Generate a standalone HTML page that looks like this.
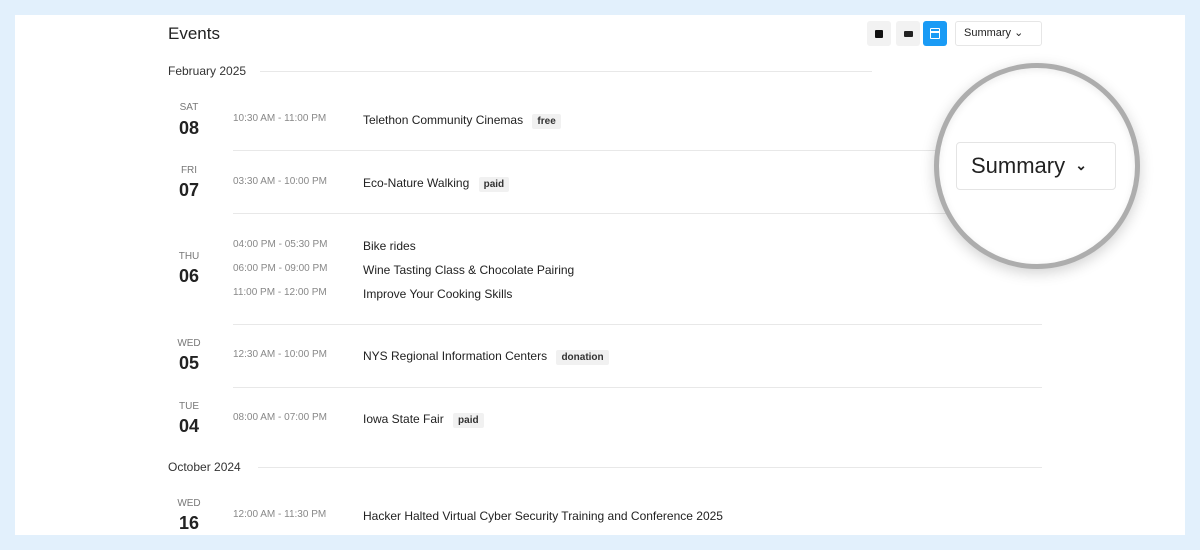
<!DOCTYPE html>
<html><head><style>
*{margin:0;padding:0;box-sizing:border-box}
body{width:1200px;height:550px;background:#e2f0fc;font-family:"Liberation Sans",sans-serif;position:relative;overflow:hidden;color:#222}
.panel{position:absolute;left:15px;top:15px;width:1170px;height:520px;background:#fff}
.a{position:absolute;white-space:nowrap}
.dw{font-size:10px;color:#777;width:42px;text-align:center;left:168px}
.dn{font-size:18px;font-weight:bold;color:#222;width:42px;text-align:center;left:168px}
.t{font-size:10px;color:#888;left:233px}
.n{font-size:12px;color:#222;left:363px}
.b{font-size:10px;background:#f1f1f1;padding:2px 5px;border-radius:2px;color:#333;font-weight:bold}
.hr{position:absolute;height:1px;background:#e8e8e8}
.m{font-size:12px;color:#333;left:168px}
.btn{position:absolute;top:21px;width:24px;height:25px;background:#f2f2f2;border-radius:3px}
</style></head><body>
<div class="panel"></div>
<div class="a" style="left:168px;top:24px;font-size:17px;color:#222">Events</div>
<div class="btn" style="left:867px"><div style="position:absolute;left:8px;top:9px;width:8px;height:8px;background:#111;border-radius:1px"></div></div>
<div class="btn" style="left:896px"><div style="position:absolute;left:8px;top:10px;width:9px;height:6px;background:#222;border-radius:1px"></div></div>
<div class="btn" style="left:923px;background:#1a9bf5"><div style="position:absolute;left:7px;top:7px;width:10px;height:11px;border:1.5px solid #fff;border-radius:1px"></div><div style="position:absolute;left:8px;top:10px;width:8px;height:1.5px;background:#fff"></div></div>
<div style="position:absolute;left:955px;top:21px;width:87px;height:25px;border:1px solid #e6e6e6;border-radius:3px;font-size:11px;line-height:23px;padding-left:8px">Summary ⌄</div>

<div class="a m" style="top:64px">February 2025</div>
<div class="hr" style="left:260px;width:612px;top:71px"></div>

<div class="a dw" style="top:102px">SAT</div><div class="a dn" style="top:118px">08</div>
<div class="a t" style="top:113px">10:30 AM - 11:00 PM</div>
<div class="a n" style="top:113px">Telethon Community Cinemas <span class="b" style="margin-left:6px">free</span></div>
<div class="hr" style="left:233px;width:809px;top:150px"></div>

<div class="a dw" style="top:165px">FRI</div><div class="a dn" style="top:180px">07</div>
<div class="a t" style="top:176px">03:30 AM - 10:00 PM</div>
<div class="a n" style="top:176px">Eco-Nature Walking <span class="b" style="margin-left:6px">paid</span></div>
<div class="hr" style="left:233px;width:809px;top:213px"></div>

<div class="a dw" style="top:251px">THU</div><div class="a dn" style="top:266px">06</div>
<div class="a t" style="top:239px">04:00 PM - 05:30 PM</div><div class="a n" style="top:239px">Bike rides</div>
<div class="a t" style="top:263px">06:00 PM - 09:00 PM</div><div class="a n" style="top:263px">Wine Tasting Class &amp; Chocolate Pairing</div>
<div class="a t" style="top:287px">11:00 PM - 12:00 PM</div><div class="a n" style="top:287px">Improve Your Cooking Skills</div>
<div class="hr" style="left:233px;width:809px;top:324px"></div>

<div class="a dw" style="top:338px">WED</div><div class="a dn" style="top:353px">05</div>
<div class="a t" style="top:349px">12:30 AM - 10:00 PM</div>
<div class="a n" style="top:349px">NYS Regional Information Centers <span class="b" style="margin-left:6px">donation</span></div>
<div class="hr" style="left:233px;width:809px;top:387px"></div>

<div class="a dw" style="top:401px">TUE</div><div class="a dn" style="top:416px">04</div>
<div class="a t" style="top:412px">08:00 AM - 07:00 PM</div>
<div class="a n" style="top:412px">Iowa State Fair <span class="b" style="margin-left:6px">paid</span></div>

<div class="a m" style="top:460px">October 2024</div>
<div class="hr" style="left:258px;width:784px;top:467px"></div>

<div class="a dw" style="top:498px">WED</div><div class="a dn" style="top:513px">16</div>
<div class="a t" style="top:509px">12:00 AM - 11:30 PM</div>
<div class="a n" style="top:509px">Hacker Halted Virtual Cyber Security Training and Conference 2025</div>

<div style="position:absolute;left:934px;top:63px;width:206px;height:206px;border-radius:50%;background:#fff;border:5px solid #adadad;box-shadow:0 4px 14px rgba(0,0,0,.18), inset 0 2px 8px rgba(0,0,0,.08)"></div>
<div style="position:absolute;left:956px;top:142px;width:160px;height:48px;border:1px solid #e4e4e4;border-radius:4px;font-size:22px;line-height:46px;padding-left:14px;color:#222">Summary <span style="font-size:14px;font-weight:bold;position:relative;top:-3px;margin-left:4px">⌄</span></div>
<div style="position:absolute;left:0;top:0;width:15px;height:550px;background:#e2f0fc"></div>
<div style="position:absolute;left:1185px;top:0;width:15px;height:550px;background:#e2f0fc"></div>
<div style="position:absolute;left:0;top:0;width:1200px;height:15px;background:#e2f0fc"></div>
<div style="position:absolute;left:0;top:535px;width:1200px;height:15px;background:#e2f0fc"></div>
</body></html>
